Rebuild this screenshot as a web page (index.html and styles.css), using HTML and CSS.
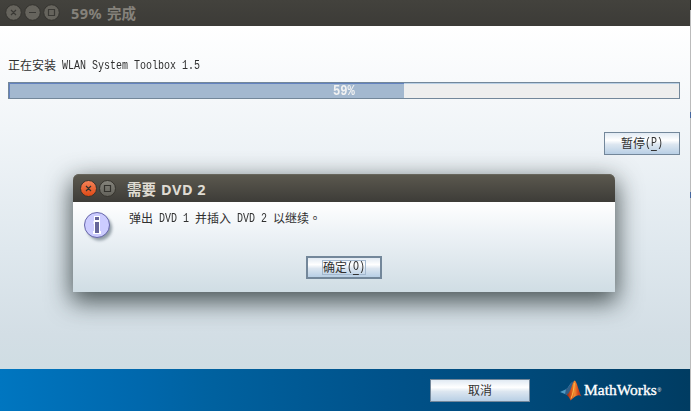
FILE: index.html
```html
<!DOCTYPE html>
<html lang="zh-CN">
<head>
<meta charset="utf-8">
<title>59% 完成</title>
<link rel="stylesheet" href="styles.css">
</head>
<body>
<div class="screen">
  <main class="window">
    <header class="titlebar">
      <svg class="controls" width="64" height="26" viewBox="0 0 64 26">
        <g fill="#66645d" stroke="#34332f"><circle cx="13.5" cy="12.5" r="7.8"/><circle cx="32.5" cy="12.5" r="7.8"/><circle cx="51.5" cy="12.5" r="7.8"/></g>
        <path d="M11 10l5 5m0-5l-5 5M29 12.5h7M48.5 9.5h6v6h-6z" fill="none" stroke="#3a3935" stroke-width="1.2"/>
      </svg>
      <h1><span class="tl tl-pct">59%</span><span class="tc">完成</span></h1>
    </header>
    <section class="body">
      <p class="line status"><span>正在安装</span><span class="mono gap w23">WLAN System Toolbox 1.5</span></p>
      <div class="progress"><div class="fill"></div><div class="pct"><span class="mono bold">59%</span></div></div>
      <button class="btn pause"><span>暂停</span><span class="mono w3">(<u>P</u>)</span></button>
    </section>
    <footer class="footer">
      <button class="btn cancel">取消</button>
      <div class="logo">
        <svg width="22" height="21" viewBox="0 0 22 21">
          <defs><linearGradient id="peak" x1="0" x2="1"><stop offset="0" stop-color="#8f2418"/><stop offset=".35" stop-color="#df5c1d"/><stop offset=".55" stop-color="#f08a30"/><stop offset=".75" stop-color="#d94b1d"/><stop offset="1" stop-color="#a82e1c"/></linearGradient></defs>
          <path d="M0 12L6 9.2C8 8.5 9 5 12 2L8 15 5 14z" fill="#4f9bc6"/>
          <path d="M6 9.2C9 8 10 3 14 .8L10 12 8 15 5 14z" fill="#315e86"/>
          <path d="M14.5.5C17 1 18.5 11 21.5 16.5C18 13.5 15 16 10.5 20.5C9.5 18 8.5 16 6.5 15C10.5 13.5 12 3 14.5.5z" fill="url(#peak)"/>
          <path d="M14.3 3C14 8 13 14 11 18.5" fill="none" stroke="#ffc04c" stroke-width=".9"/>
        </svg>
        <span class="brand">MathWorks</span><span class="reg">®</span>
      </div>
    </footer>
  </main>
  <aside class="edge"></aside>

  <section class="dialog">
    <header class="dialog-title">
      <svg class="dialog-controls" width="48" height="28" viewBox="0 0 48 28">
        <defs>
          <linearGradient id="close" x2="0" y2="1"><stop stop-color="#f68459"/><stop offset="1" stop-color="#dd4814"/></linearGradient>
          <linearGradient id="max" x2="0" y2="1"><stop stop-color="#85847c"/><stop offset="1" stop-color="#62615a"/></linearGradient>
        </defs>
        <circle cx="15.5" cy="14.5" r="8" fill="url(#close)" stroke="#35332d"/>
        <circle cx="34.5" cy="14.5" r="8" fill="url(#max)" stroke="#35332d"/>
        <path d="M13 12l5 5m0-5l-5 5M31.5 11.5h6v6h-6z" fill="none" stroke="#33322d" stroke-width="1.2"/>
      </svg>
      <h2><span class="tc">需要</span><span class="tl tl-dvd">DVD 2</span></h2>
    </header>
    <div class="dialog-body">
      <div class="message">
        <svg class="info" width="32" height="32" viewBox="0 0 32 32">
          <circle cx="15.5" cy="16" r="12.5" fill="#60707c" class="info-shadow"/>
          <circle cx="13" cy="13" r="12.5" fill="#ccf" stroke="#66a"/>
          <path d="M10 4h6v5h-6zM9.5 9h6.500v10h1v3h-8v-3h1v-7h-.5z" fill="#fff"/>
          <path d="M11 5h4v3h-4zM11 10h4v11h-4z" fill="#669"/>
        </svg>
        <p class="line"><span>弹出</span><span class="mono gap w5">DVD 1</span><span class="gap">并插入</span><span class="mono gap w5">DVD 2</span><span class="gap">以继续</span><span class="stop" lang="zh-TW">。</span></p>
      </div>
      <button class="btn ok"><span class="focus"><span>确定</span><span class="mono w3">(<u>O</u>)</span></span></button>
    </div>
  </section>
</div>
</body>
</html>
```
FILE: styles.css
```css
* { box-sizing: border-box; }
body { margin: 0; overflow: hidden; font: 12px/16px "Noto Sans CJK SC", sans-serif; color: #303030; }
h1, h2, p { margin: 0; }
svg { display: block; flex: none; }

.screen { position: relative; display: flex; width: 691px; height: 411px; }
.window { display: flex; flex-direction: column; width: 690px; }
.edge { width: 1px; background: linear-gradient(#292a27 0 10px, #bbb 10px 112px, #46669e 112px 118px, #bbb 118px 192px, #46669e 192px 198px, #bbb 198px); }

.titlebar { display: flex; align-items: center; height: 26px; background: linear-gradient(#43423d, #3c3b37); color: #85827b; }
h1, h2 { display: flex; align-items: center; font-weight: 700; font-size: 14px; line-height: 20px; white-space: nowrap; }
h1 { margin-left: 7px; padding-top: 1px; }
h2 { margin-left: 6px; padding-top: 3px; color: #dfdbd2; }
.tl { margin-top: -2px; font-family: "Noto Sans", sans-serif; font-size: 14.5px; letter-spacing: .5px; }
.tc { font-size: 14.5px; margin-top: -1px; }
.tl-pct { width: 36px; }
.tl-dvd { margin-left: 5px; }

.body { display: flex; flex-direction: column; height: 343px; padding: 32px 10px 0 8px; background: linear-gradient(#fff, #f1f5f8 30%, #dfe8ee 65%, #d3dee5 90%, #cfdde3); }
.line { display: flex; align-items: center; height: 16px; white-space: nowrap; }
.line > span:not(.mono) { margin-top: -2px; }
.gap { margin-left: 6px; }
.mono { display: block; font-family: "Liberation Mono", monospace; font-size: 13.5px; white-space: pre; transform: scaleX(.7406); transform-origin: left; }
.w23 { width: 138px; }
.w5 { width: 30px; }
.w3 { width: 18px; }
.bold { width: 22px; padding-top: 1px; font-size: 14px; font-weight: 700; transform: scaleX(.87); }
u { text-decoration: none; border-bottom: 1px solid #333; }

.progress { position: relative; height: 17px; margin: 8px 2px 0 0; width: 672px; border: 1px solid #73879a; background: #eee; box-shadow: inset 0 1px #b8cfe5; }
.fill { width: 59%; height: 15px; background: #a3b8cf; border-top: 1px solid #6382bf; border-left: 1px solid #6382bf; }
.pct { position: absolute; inset: 0; display: flex; justify-content: center; align-items: center; color: #f2f2f2; }

.btn { display: flex; align-items: center; justify-content: center; flex: none; padding: 0 0 2px; border: 1px solid #73879a; border-radius: 0; background: linear-gradient(#e1eaf3, #fff 35%, #dce6f0 55%, #b8cfe5); font: inherit; color: #303030; }
.pause { width: 76px; height: 23px; margin: 33px 0 0 auto; align-self: flex-end; }

.footer { display: flex; align-items: center; height: 42px; padding-left: 430px; background: linear-gradient(90deg, #0076c0, #0068ad 20%, #00619f 31%, #00528a 56%, #004a7b 75%, #003c62); }
.cancel { width: 100px; height: 23px; margin-top: 1px; }
.logo { display: flex; align-items: center; margin-left: 30px; }
.brand { margin-left: 2px; width: 73.5px; color: #fff; font: 15.5px/20px "Liberation Serif", serif; -webkit-text-stroke: .35px #fff; }
.reg { color: #fff; font: 5px/8px "Liberation Sans", sans-serif; }

.dialog { position: absolute; left: 73px; top: 174px; width: 542px; height: 118px; border-radius: 6px 6px 0 0; box-shadow: 0 8px 24px 2px rgba(20, 30, 30, .72); }
.dialog-title { display: flex; align-items: center; height: 28px; border-radius: 6px 6px 0 0; background: linear-gradient(#5c594f, #3d3c38); box-shadow: inset 0 1px #68665c; }
.dialog-body { display: flex; flex-direction: column; height: 90px; background: linear-gradient(#fff, #edf2f6 35%, #d0dde4); }
.message { display: flex; height: 54px; padding: 10px 0 0 11px; }
.message .line { margin: -1px 0 0 13px; }
.stop { font-family: "Noto Sans CJK TC", sans-serif; }
.info { overflow: visible; }
.info-shadow { filter: blur(1.5px); opacity: .65; }
.ok { width: 76px; height: 23px; margin-left: 233px; padding: 0; border-width: 2px; }
.focus { display: flex; align-items: center; width: 44px; height: 15px; padding-bottom: 1px; border: 1px solid #a3b8cf; }
```
